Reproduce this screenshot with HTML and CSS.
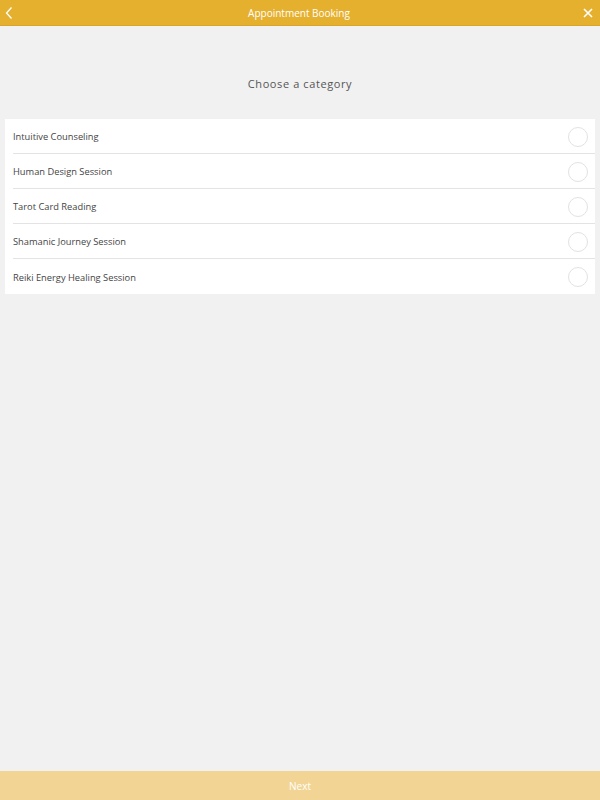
FILE: index.html
```html
<!DOCTYPE html>
<html>
<head>
<meta charset="utf-8">
<link rel="stylesheet" href="styles.css">
</head>
<body>
<div class="app">
  <header class="topbar">
    <button class="icon-btn back" aria-label="Back">
      <svg width="10" height="14" viewBox="0 0 10 14"><path d="M6.5 1.5 L1.5 7 L6.5 12.5" fill="none" stroke="#fff" stroke-width="1.3"/></svg>
    </button>
    <h1 class="title">Appointment Booking</h1>
    <button class="icon-btn close" aria-label="Close">
      <svg width="12" height="12" viewBox="0 0 12 12"><path d="M2 2 L10 10 M10 2 L2 10" fill="none" stroke="#fff" stroke-width="1.6"/></svg>
    </button>
  </header>
  <main class="content">
    <h2 class="heading">Choose a category</h2>
    <ul class="list">
      <li class="row"><span class="label">Intuitive Counseling</span><span class="radio"></span></li>
      <li class="row"><span class="label">Human Design Session</span><span class="radio"></span></li>
      <li class="row"><span class="label">Tarot Card Reading</span><span class="radio"></span></li>
      <li class="row"><span class="label">Shamanic Journey Session</span><span class="radio"></span></li>
      <li class="row"><span class="label">Reiki Energy Healing Session</span><span class="radio"></span></li>
    </ul>
  </main>
  <footer class="footer">Next</footer>
</div>
</body>
</html>
```
FILE: styles.css
```css
* { box-sizing: border-box; }
html, body { margin: 0; padding: 0; }
body {
  background: #f1f1f1;
  font-family: "Open Sans", "Liberation Sans", sans-serif;
}
.app {
  width: 600px;
  height: 800px;
  display: flex;
  flex-direction: column;
}
.topbar {
  height: 26px;
  background: #e6b02f;
  border-bottom: 1px solid #d8a42a;
  display: flex;
  align-items: center;
  justify-content: space-between;
  padding: 0 4px 0 2px;
  flex-shrink: 0;
}
.icon-btn {
  background: none;
  border: 0;
  padding: 0;
  width: 16px;
  height: 16px;
  display: flex;
  align-items: center;
  justify-content: center;
}
.title {
  margin: 0;
  font-size: 10px;
  font-weight: 400;
  color: #fff;
}
.content {
  flex: 1;
  display: flex;
  flex-direction: column;
}
.heading {
  margin: 51px 0 0;
  height: 42px;
  font-size: 11px;
  font-weight: 400;
  letter-spacing: 0.6px;
  color: #555;
  text-align: center;
  line-height: 13px;
}
.list {
  list-style: none;
  margin: 0 5px;
  padding: 0 0 0 8px;
  background: #fff;
}
.row {
  height: 35px;
  display: flex;
  align-items: center;
  justify-content: space-between;
  border-bottom: 1px solid #e3e3e3;
  padding: 1px 7px 0 0;
}
.row:last-child { border-bottom: 0; }
.label {
  font-size: 9.3px;
  color: #444;
}
.radio {
  width: 20px;
  height: 20px;
  border-radius: 50%;
  border: 1px solid #e2e2e2;
  background: #fff;
}
.footer {
  height: 29px;
  background: #f2d594;
  color: #fff;
  font-size: 10px;
  display: flex;
  align-items: center;
  justify-content: center;
  flex-shrink: 0;
}
```
